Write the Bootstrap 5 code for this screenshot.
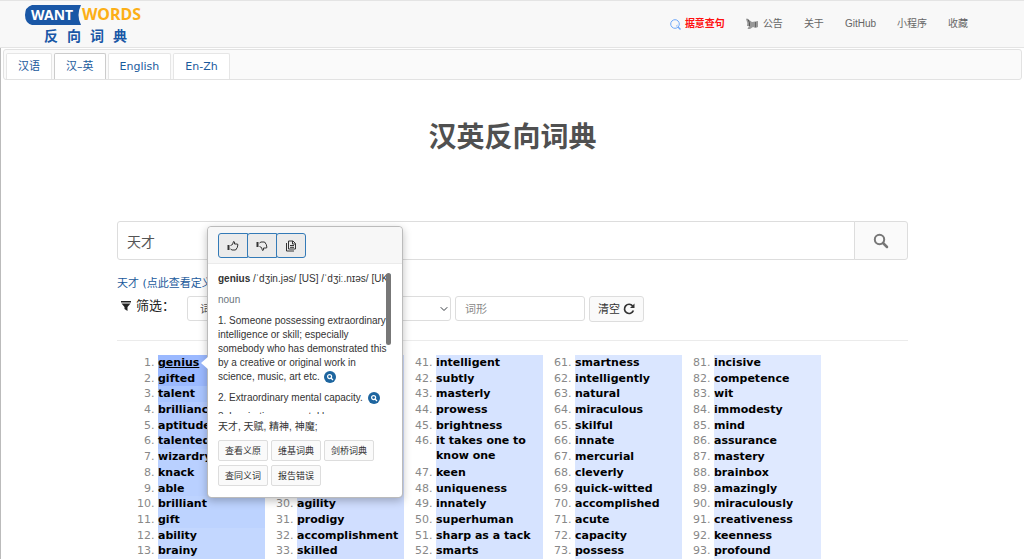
<!DOCTYPE html>
<html lang="zh-CN">
<head>
<meta charset="utf-8">
<meta name="viewport" content="width=device-width, initial-scale=1">
<title>WantWords 反向词典</title>
<link href="https://cdn.jsdelivr.net/npm/bootstrap@5.3.0/dist/css/bootstrap.min.css" rel="stylesheet">
<style>
:root { --ui: "Liberation Sans", "Noto Sans CJK SC", sans-serif; --wide: "DejaVu Sans", "Noto Sans CJK SC", sans-serif; --line: #ddd; --link: #1b5a9c; }
body { font-family: var(--ui); font-size: 11px; line-height: 16px; color: #333; }
a { color: var(--link); text-decoration: none; }
svg { display: block; flex: none; }
.topbar { height: 48px; background: #f8f8f8; border: solid #e4e4e4; border-width: 1px 0; padding: 0 56px 2px 24px; }
.brand-sub { font: 700 14px/16px "Noto Sans CJK SC", sans-serif; color: #1a57a6; gap: 9px; margin-left: 20px; }
.topbar .nav { gap: 21px; font-size: 10px; padding-top: 2px; }
.topbar .nav a { color: #666; }
.topbar .nav a.hot { color: #f11; font-weight: 700; }
.page { border-left: 1px solid #bbb; }
.langs { margin: 1px 2px 0 2px; height: 31px; padding: 3px 2px 0; gap: 2px; border: 1px solid #e2e2e2; border-radius: 3px; background: #fafafa; font-family: var(--wide); font-size: 11px; }
.langs .nav-link { padding: 0 11px; line-height: 26px; color: var(--link); background: #fff; border: 1px solid #e6e6e6; border-bottom-width: 0; border-radius: 2px 2px 0 0; }
.langs .nav-link.active { border-color: #ccc; color: var(--link); }
.sheet { width: 100%; max-width: 791px; }
h1 { font: 700 28px/40px "Noto Sans CJK SC", sans-serif; color: #505050; margin: 35px 0 66px; }
.search .form-control { height: 39px; padding: 0 9px; font-size: 14px; color: #555; border-color: var(--line); border-radius: 3px; }
.search .btn { width: 54px; background: #fafafa; border-color: var(--line); border-radius: 3px; color: #777; }
.deflink { font-family: var(--wide); margin-top: 16px; }
.filters { gap: 4px; margin-top: 4px; }
.filters .lead-in { width: 66px; font-size: 13px; color: #222; gap: 5px; padding-left: 4px; margin-bottom: 6px; }
.filters .form-select, .filters .form-control { width: 130px; height: 25px; padding: 0 9px; font-size: 11px; line-height: 16px; border-color: var(--line); border-radius: 3px; color: #555; }
.filters .form-select { padding-left: 12px; background-size: 8px 8px; background-position: right 2px center; }
.filters .form-control::placeholder { color: #888; }
.filters .btn { height: 26px; padding: 0 8px; font-size: 11px; background: #fafafa; border-color: var(--line); border-radius: 3px; gap: 3px; color: #333; }
hr { margin: 18px 0 14px; border-color: #ddd; opacity: .6; }
.words { display: grid; grid-template-columns: repeat(5, 1fr); gap: 32px; padding: 0 87px 0 41px; }
.words ol { margin: 0; padding: 0; font: 700 11px/15px var(--wide); color: #000; background: #d6e3ff; }
.words li { flex: 1 1 0; }
.words li.tall { flex-grow: 2; }
.words li::marker { color: #888; font-weight: 400; }
.words li a { color: inherit; }
.words ol.rank-1 { background: linear-gradient(#9bb9ff 15%, #a9c5ff 15% 23%, #b2caff 23% 46%, #b9d0ff 46% 69%, #bdd3ff 69% 85%, #c3d7ff 85%); }
.words ol.rank-2 { background: #d0deff; }
.words ol.rank-4 { background: #dae6ff; }
.words ol.rank-5 { background: #dfe9ff; }
.tip { top: -129px; left: 49px; width: 196px; max-width: none; font: 10px/14px var(--ui); color: #333; border: 1px solid #bbb; border-radius: 4px; box-shadow: 0 3px 8px rgba(0,0,0,.25); }
.tip .popover-header { height: 37px; padding: 6px 10px; background: #f7f7f7; border-bottom: 1px solid #ebebeb; border-radius: 4px 4px 0 0; }
.tip .btn-group .btn { width: 30px; height: 25px; padding: 0; background: #ebebeb; border-color: #337ab7; border-radius: 3px; color: #333; }
.tip .popover-body { padding: 8px 10px 11px; color: #333; }
.tip .tail { left: -7px; top: 129px; width: 8px; height: 14px; background: #fff; clip-path: polygon(100% 0, 0 50%, 100% 100%); }
.defs { height: 142px; overflow: hidden; }
.defs p { margin: 0 0 7px; }
.defs .sense { margin-bottom: 5px; }
.defs .thumb { top: 1px; right: 1px; width: 5px; height: 72px; border-radius: 3px; background: #777; }
.defs .look { display: inline-block; vertical-align: -3px; margin-left: 2px; }
.trans { margin: 6px 0; }
.tip .acts { gap: 4px 3px; }
.tip .acts .btn { padding: 0; height: 21px; width: 50px; font-size: 9px; line-height: 18px; color: #333; background: #fafafa; border-color: var(--line); border-radius: 2px; }
</style>
</head>
<body class="d-flex flex-column min-vh-100">
<header class="topbar d-flex align-items-center justify-content-between">
  <a href="#" class="d-block" aria-label="WantWords">
    <svg width="122" height="23" viewBox="0 0 122 23" font-family="Noto Sans" font-weight="700">
      <path d="M8 1H57Q52 11 57 21H8Q1 19 1 11T8 1Z" fill="#1a57a6"/>
      <text x="7" y="16" font-size="14" fill="#fff">WANT</text>
      <text x="58" y="16" font-size="16" fill="#fcaf17">WORDS</text>
    </svg>
    <span class="brand-sub d-flex"><span>反</span><span>向</span><span>词</span><span>典</span></span>
  </a>
  <nav class="nav">
    <a href="#" class="hot d-flex align-items-center gap-1"><svg width="11" height="11" viewBox="0 0 11 11" fill="none" stroke="#6ea8fa"><circle cx="5" cy="5" r="4.3"/><path d="M8 8l2.5 2.5" stroke-width="1.4"/><path d="M6 7.4Q7.2 7 7.4 5.8" stroke-width=".7"/></svg>据意查句</a>
    <a href="#" class="d-flex align-items-center gap-1"><svg width="13" height="12" viewBox="0 0 13 12"><path d="M0 1Q1 0 2.5 1.5L6 4 12 3V9L9.5 10 7 9 4 11H1.5L3 8 1 8Q2 5 0 1" fill="#999"/><path d="M2 1.5Q4 4 3.5 8" stroke="#555" fill="none"/><path d="M9.5 4V9" stroke="#666"/></svg>公告</a>
    <a href="#">关于</a><a href="#">GitHub</a><a href="#">小程序</a><a href="#">收藏</a>
  </nav>
</header>
<div class="page d-flex flex-column flex-grow-1">
  <nav class="langs nav flex-nowrap">
    <a class="nav-link" href="#">汉语</a><a class="nav-link active" href="#">汉–英</a><a class="nav-link" href="#">English</a><a class="nav-link" href="#">En-Zh</a>
  </nav>
  <main class="sheet mx-auto d-flex flex-column flex-grow-1">
    <h1 class="text-center">汉英反向词典</h1>
    <form class="search input-group">
      <input class="form-control" type="text" value="天才" aria-label="描述">
      <button class="btn d-flex align-items-center justify-content-center" type="button" aria-label="搜索"><svg width="16" height="16" viewBox="0 0 16 16" fill="none" stroke="currentColor"><circle cx="6.5" cy="6.5" r="4.7" stroke-width="2"/><path d="M10 10l4 4" stroke-width="2.5" stroke-linecap="round"/></svg></button>
    </form>
    <a class="deflink" href="#">天才 (点此查看定义)</a>
    <div class="filters d-flex">
      <span class="lead-in d-flex align-items-center text-nowrap"><svg width="10" height="10" viewBox="0 0 10 10"><path d="M0 0H10V1.5H0ZM.5 2.5H9.5L6.5 6V10L3.5 8V6Z" fill="#222"/></svg>筛选：</span>
      <select class="form-select" aria-label="词性"><option>词性</option></select>
      <select class="form-select" aria-label="词长"><option>词长</option></select>
      <input class="form-control" type="text" placeholder="词形" aria-label="词形">
      <button class="btn d-flex align-items-center" type="button">清空<svg width="12" height="12" viewBox="0 0 12 12" fill="none" stroke="#333" stroke-width="1.7"><path d="M9.7 3A4.6 4.6 0 1 0 10.4 7.5"/><path d="M11.5.5V5H7Z" fill="#333" stroke="none"/></svg></button>
    </div>
    <hr>
    <div class="words flex-grow-1">
      <ol class="rank-1 d-flex flex-column">
        <li class="position-relative"><a href="#" class="text-decoration-underline">genius</a>
          <div class="tip popover position-absolute">
            <div class="tail position-absolute"></div>
            <div class="popover-header">
              <div class="btn-group">
                <button class="btn d-flex align-items-center justify-content-center" type="button" aria-label="赞"><svg width="12" height="12" viewBox="0 0 12 12" fill="none" stroke="currentColor"><path d="M1.5 5V10" stroke-width="2"/><path d="M3.5 5.5L5.5 4.5 6.5 1.5Q8.2 1.3 7.5 4H10.5Q11.4 5 10.5 6 10.8 7.5 9.8 8 9.5 10 8 10H5L3.5 9"/></svg></button>
                <button class="btn d-flex align-items-center justify-content-center" type="button" aria-label="踩"><svg width="12" height="12" viewBox="0 0 12 12" fill="none" stroke="currentColor"><path d="M1.5 2V7" stroke-width="2"/><path d="M3.5 6.5L5.5 7.5 6.5 10.5Q8.2 10.7 7.5 8H10.5Q11.4 7 10.5 6 10.8 4.5 9.8 4 9.5 2 8 2H5L3.5 3"/></svg></button>
                <button class="btn d-flex align-items-center justify-content-center" type="button" aria-label="复制"><svg width="12" height="12" viewBox="0 0 12 12" fill="none" stroke="currentColor"><path d="M3.5 1H8L10.5 3.5V9H3.5ZM7.5 1V4H10.5M5 5.5H9M5 7.3H9"/><path d="M1.5 3V11H9"/></svg></button>
              </div>
            </div>
            <div class="popover-body">
              <div class="defs position-relative">
                <p class="text-nowrap"><b>genius</b> /ˈdʒin.jəs/ [US] /ˈdʒiː.nɪəs/ [UK]</p>
                <p class="text-secondary">noun</p>
                <p>1. Someone possessing extraordinary intelligence or skill; especially somebody who has demonstrated this by a creative or original work in science, music, art etc. <a href="#" class="look" aria-label="查找"><svg width="12" height="12" viewBox="0 0 12 12"><circle cx="6" cy="6" r="6" fill="#1d659f"/><circle cx="5.6" cy="5.6" r="2" fill="none" stroke="#fff" stroke-width="1.2"/><path d="M7 7l2 2" stroke="#fff" stroke-width="1.3"/></svg></a></p>
                <p class="sense">2. Extraordinary mental capacity. <a href="#" class="look" aria-label="查找"><svg width="12" height="12" viewBox="0 0 12 12"><circle cx="6" cy="6" r="6" fill="#1d659f"/><circle cx="5.6" cy="5.6" r="2" fill="none" stroke="#fff" stroke-width="1.2"/><path d="M7 7l2 2" stroke="#fff" stroke-width="1.3"/></svg></a></p>
                <p class="sense">3. Inspiration, a mental leap</p>
                <span class="thumb position-absolute"></span>
              </div>
              <p class="trans">天才, 天赋, 精神, 神魔;</p>
              <div class="acts d-flex flex-wrap">
                <button class="btn" type="button">查看义原</button><button class="btn" type="button">维基词典</button><button class="btn" type="button">剑桥词典</button><button class="btn" type="button">查同义词</button><button class="btn" type="button">报告错误</button>
              </div>
            </div>
          </div>
        </li>
        <li>gifted</li><li>talent</li><li>brilliance</li><li>aptitude</li><li>talented</li><li>wizardry</li><li>knack</li><li>able</li><li>brilliant</li><li>gift</li><li>ability</li><li>brainy</li>
      </ol>
      <ol class="rank-2 d-flex flex-column" start="21">
        <li>clever</li><li>prowess</li><li>master</li><li>talents</li><li>smart</li><li>skill</li><li>bright</li><li>flair</li><li>expert</li><li>agility</li><li>prodigy</li><li>accomplishment</li><li>skilled</li>
      </ol>
      <ol class="rank-3 d-flex flex-column" start="41">
        <li>intelligent</li><li>subtly</li><li>masterly</li><li>prowess</li><li>brightness</li><li class="tall">it takes one to know one</li><li>keen</li><li>uniqueness</li><li>innately</li><li>superhuman</li><li>sharp as a tack</li><li>smarts</li>
      </ol>
      <ol class="rank-4 d-flex flex-column" start="61">
        <li>smartness</li><li>intelligently</li><li>natural</li><li>miraculous</li><li>skilful</li><li>innate</li><li>mercurial</li><li>cleverly</li><li>quick-witted</li><li>accomplished</li><li>acute</li><li>capacity</li><li>possess</li>
      </ol>
      <ol class="rank-5 d-flex flex-column" start="81">
        <li>incisive</li><li>competence</li><li>wit</li><li>immodesty</li><li>mind</li><li>assurance</li><li>mastery</li><li>brainbox</li><li>amazingly</li><li>miraculously</li><li>creativeness</li><li>keenness</li><li>profound</li>
      </ol>
    </div>
  </main>
</div>
<script src="https://cdn.jsdelivr.net/npm/bootstrap@5.3.0/dist/js/bootstrap.bundle.min.js"></script>
</body>
</html>
